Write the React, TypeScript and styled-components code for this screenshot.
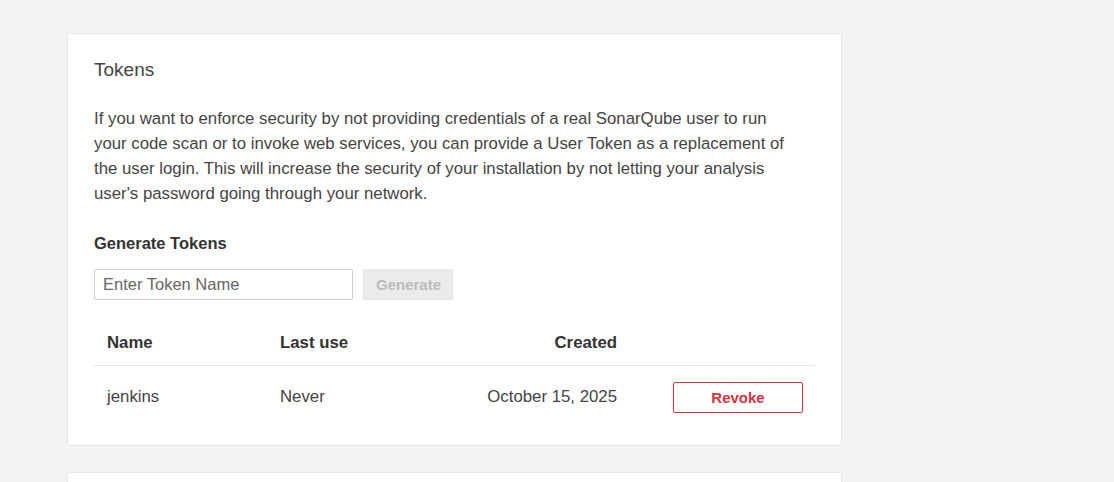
import React from "react";
import styled, { createGlobalStyle } from "styled-components";

const Global = createGlobalStyle`
  html, body { margin: 0; padding: 0; background: #f3f3f3; }
  body { font-family: "Liberation Sans", Arial, sans-serif; color: #444; }
  * { box-sizing: border-box; }
`;

const Page = styled.div`
  display: flex;
  flex-direction: column;
  gap: 26px;
  padding: 33px 0 0 67px;
  width: 842px;
  height: 482px;
  overflow: hidden;
`;

const Card = styled.section<{ $stub?: boolean }>`
  background: #fff;
  border: 1px solid #e6e6e6;
  border-radius: 2px;
  padding: ${(p) => (p.$stub ? "0" : "24px 26px 32px 26px")};
  height: ${(p) => (p.$stub ? "40px" : "auto")};
  flex-shrink: 0;
`;

const Title = styled.h3`
  margin: 0 0 24px 0;
  font-size: 19px;
  font-weight: 400;
  line-height: 24px;
  color: #444;
`;

const Paragraph = styled.p`
  margin: 0 0 27px 0;
  max-width: 700px;
  font-size: 16.8px;
  line-height: 25px;
  color: #444;
`;

const Subtitle = styled.h4`
  margin: 0 0 16px 0;
  font-size: 16.5px;
  font-weight: 700;
  line-height: 20px;
  color: #333;
`;

const Form = styled.form`
  display: flex;
  gap: 10px;
  margin-bottom: 21px;
`;

const Input = styled.input`
  width: 259px;
  height: 31px;
  border: 1px solid #cdcdcd;
  border-radius: 2px;
  padding: 0 8px;
  font-family: inherit;
  font-size: 16.5px;
  color: #444;
  &::placeholder { color: #666; }
`;

const Button = styled.button<{ $variant?: "disabled" | "danger" }>`
  height: 31px;
  border-radius: 2px;
  font-family: inherit;
  font-size: 15px;
  font-weight: 700;
  padding: 0 12px;
  background: #fff;
  cursor: pointer;
  ${(p) =>
    p.$variant === "disabled"
      ? `background:#ebebeb;color:#bbb;border:1px solid #e4e4e4;width:90px;cursor:not-allowed;`
      : ""}
  ${(p) =>
    p.$variant === "danger"
      ? `color:#d4333f;border:1px solid #d4333f;width:130px;`
      : ""}
`;

const Table = styled.table`
  width: 100%;
  border-collapse: collapse;
  table-layout: fixed;
`;

const Th = styled.th<{ $align?: string; $w?: number }>`
  text-align: ${(p) => p.$align || "left"};
  width: ${(p) => (p.$w ? `${p.$w}px` : "auto")};
  font-size: 16.8px;
  font-weight: 700;
  color: #333;
  padding: 12px 13px;
  line-height: 20px;
  border-bottom: 1px solid #e6e6e6;
`;

const Td = styled.td<{ $align?: string }>`
  text-align: ${(p) => p.$align || "left"};
  font-size: 16.8px;
  color: #444;
  padding: 16px 13px 0;
  line-height: 30px;
  vertical-align: top;
`;

const ActionTd = styled(Td)`
  padding-right: 12px;
  line-height: 31px;
`;

export default function App() {
  return (
    <>
      <Global />
      <Page>
        <Card>
          <Title>Tokens</Title>
          <Paragraph>
            If you want to enforce security by not providing credentials of a real SonarQube user to run
            your code scan or to invoke web services, you can provide a User Token as a replacement of
            the user login. This will increase the security of your installation by not letting your analysis
            user's password going through your network.
          </Paragraph>
          <Subtitle>Generate Tokens</Subtitle>
          <Form onSubmit={(e) => e.preventDefault()}>
            <Input placeholder="Enter Token Name" />
            <Button type="submit" $variant="disabled" disabled>
              Generate
            </Button>
          </Form>
          <Table>
            <thead>
              <tr>
                <Th $w={173}>Name</Th>
                <Th $w={193}>Last use</Th>
                <Th $w={170} $align="right">Created</Th>
                <Th />
              </tr>
            </thead>
            <tbody>
              <tr>
                <Td>jenkins</Td>
                <Td>Never</Td>
                <Td $align="right">October 15, 2025</Td>
                <ActionTd $align="right">
                  <Button type="button" $variant="danger">Revoke</Button>
                </ActionTd>
              </tr>
            </tbody>
          </Table>
        </Card>
        <Card $stub />
      </Page>
    </>
  );
}
